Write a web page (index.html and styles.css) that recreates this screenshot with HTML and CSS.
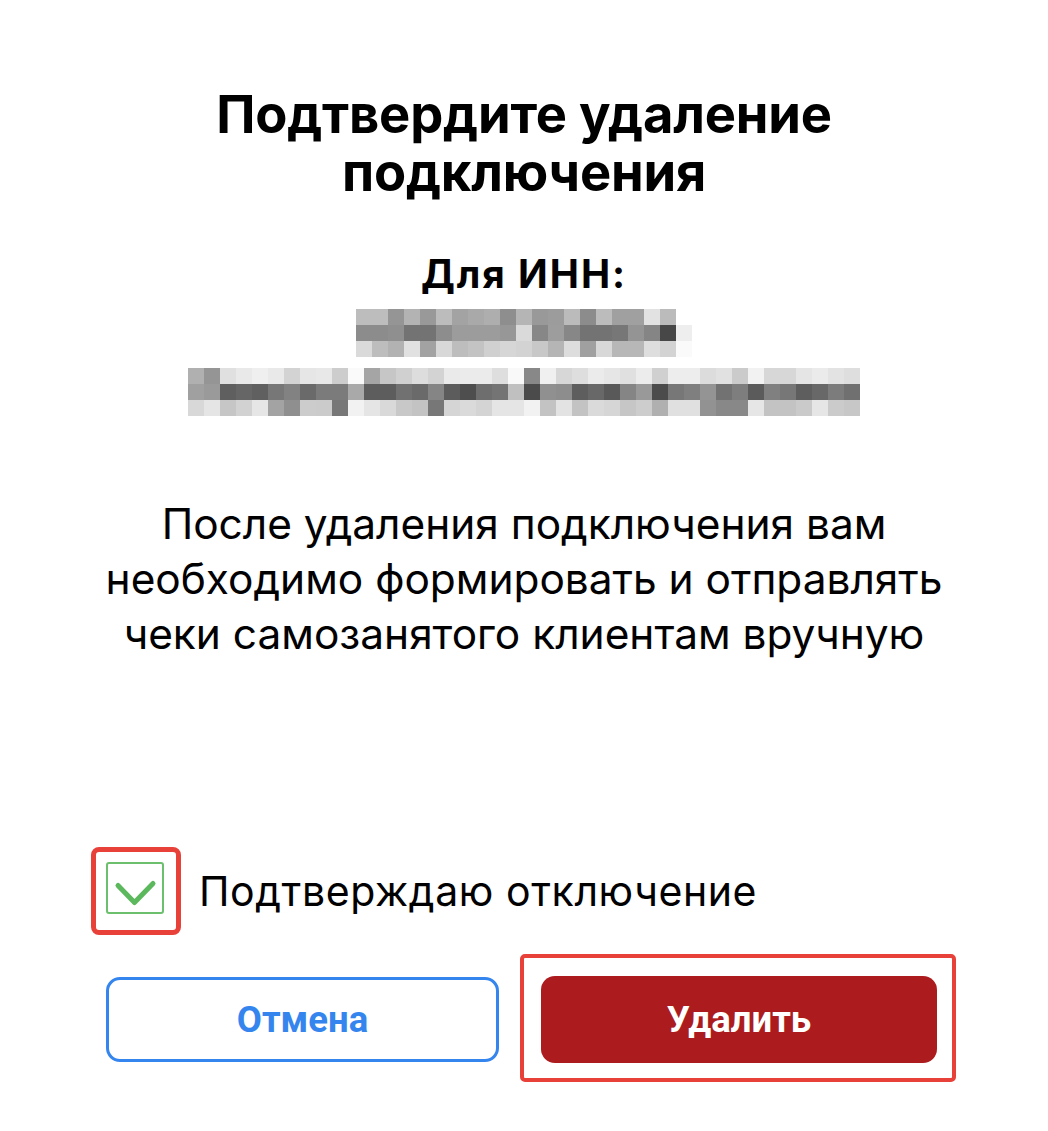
FILE: index.html
```html
<!DOCTYPE html>
<html lang="ru">
<head>
<meta charset="utf-8">
<title>Подтвердите удаление подключения</title>
<link rel="stylesheet" href="styles.css">
</head>
<body>
<div class="dialog">
  <h1 class="title">Подтвердите удаление<br>подключения</h1>
  <div class="inn-label">Для ИНН:</div>
  <div class="mosaic">
    <svg id="mosaic-top" class="mosaic-row" width="336" height="48" shape-rendering="crispEdges"></svg>
    <svg id="mosaic-bottom" class="mosaic-row" width="672" height="48" shape-rendering="crispEdges"></svg>
  </div>
  <p class="message">После удаления подключения вам<br>необходимо формировать и отправлять<br>чеки самозанятого клиентам вручную</p>
  <label class="confirm">
    <span class="hl hl-check">
      <span class="checkbox">
        <svg width="54" height="48" viewBox="0 0 54 48"><path d="M10 21.5 L26.5 38.5 L45 19.5" fill="none" stroke="#5cb85c" stroke-width="5" stroke-linecap="round" stroke-linejoin="round"/></svg>
      </span>
    </span>
    <span class="confirm-text">Подтверждаю отключение</span>
  </label>
  <div class="actions">
    <button class="btn btn-cancel" type="button">Отмена</button>
    <span class="hl hl-delete"><button class="btn btn-delete" type="button">Удалить</button></span>
  </div>
</div>
<script src="app.js"></script>
</body>
</html>
```
FILE: styles.css
```css
* { box-sizing: border-box; }
html, body { margin: 0; padding: 0; background: #fff; }
body { font-family: Inter, "Noto Sans", "DejaVu Sans", sans-serif; color: #000; }

.dialog {
  width: 1048px;
  padding: 85px 91px 0;
  display: flex;
  flex-direction: column;
}

.title {
  margin: 0;
  font-size: 52.5px;
  line-height: 58px;
  font-weight: 700;
  text-align: center;
  letter-spacing: -0.2px;
}

.inn-label {
  margin-top: 51px;
  font-size: 39px;
  line-height: 44px;
  font-weight: 700;
  text-align: center;
  letter-spacing: 2px;
}

.mosaic {
  margin-top: 13px;
  display: flex;
  flex-direction: column;
  align-items: center;
  gap: 11px;
}
.mosaic-row { display: block; }

.message {
  margin: 80px 0 0;
  font-size: 42.4px;
  line-height: 55px;
  font-weight: 400;
  text-align: center;
}

.confirm {
  margin-top: 186px;
  display: flex;
  align-items: center;
  gap: 18px;
}
.hl {
  display: inline-flex;
  border: 5px solid #e8413a;
}
.hl-check {
  width: 90px;
  height: 88px;
  border-radius: 8px;
  padding: 10px 0 0 10px;
}
.checkbox {
  width: 58px;
  height: 52px;
  border: 2px solid #6cbf6c;
  border-radius: 3px;
  display: block;
}
.checkbox svg { display: block; }
.confirm-text {
  font-size: 41px;
  line-height: 48px;
  letter-spacing: 0.6px;
}

.actions {
  margin-top: 19px;
  margin-left: 15px;
  display: flex;
  align-items: flex-start;
  gap: 21px;
}
.btn {
  font-family: Roboto, "Liberation Sans", sans-serif;
  font-weight: 700;
  font-size: 36.5px;
  border-radius: 14px;
  cursor: pointer;
}
.btn-cancel {
  margin-top: 23px;
  width: 393px;
  height: 85px;
  background: #fff;
  border: 3px solid #3585ef;
  color: #3585ef;
}
.hl-delete {
  border-width: 4px;
  border-radius: 5px;
  padding: 18px 15px 15px 17px;
}
.btn-delete {
  width: 396px;
  height: 87px;
  border: none;
  background: #ac1b1d;
  color: #fff;
}
```
FILE: app.js
```js
(function () {
  var top = [
    "bd bd 95 b3 99 bc a3 a9 ae 8e b5 99 9c bb 8c bc a0 a0 e2 bb ff",
    "8c 8c 8f 73 73 8d 9c 9c 9c 97 da 87 9d 87 73 73 77 94 85 47 ee",
    "da bd b2 e1 a2 d8 bd c3 d0 d6 d3 c8 b5 dd a0 d8 b7 b7 de d3 fa"
  ];
  var bottom = [
    "b0 95 e0 e9 ef e9 d3 e6 e8 cd fa a5 c6 d0 dd d3 ea eb eb de f9 88 f0 d7 de eb e6 e0 ec d0 ed ed dc e1 cb f2 d7 d7 e5 eb e3 de",
    "a0 9a 5f 66 60 77 82 6a 7b 7b a9 5d 5d 71 6a 85 5c 4e 6e 74 c0 4b 90 8d 5e 68 59 85 99 4b 77 7f 94 72 7e 5b 80 77 5e 68 7c 70",
    "d8 e5 c6 d2 e6 a3 8f cc cb 77 f2 e5 d9 c8 c3 77 d5 da d4 e5 e5 f2 c3 e3 c3 da d6 c6 cd b0 e0 e0 92 88 88 e6 c3 c3 ca e6 cb c7"
  ];
  var NS = "http://www.w3.org/2000/svg";
  function fill(id, rows) {
    var svg = document.getElementById(id);
    rows.forEach(function (row, r) {
      row.split(" ").forEach(function (v, c) {
        var rect = document.createElementNS(NS, "rect");
        rect.setAttribute("x", c * 16);
        rect.setAttribute("y", r * 16);
        rect.setAttribute("width", 16);
        rect.setAttribute("height", 16);
        rect.setAttribute("fill", "#" + v + v + v);
        svg.appendChild(rect);
      });
    });
  }
  fill("mosaic-top", top);
  fill("mosaic-bottom", bottom);
})();
```
